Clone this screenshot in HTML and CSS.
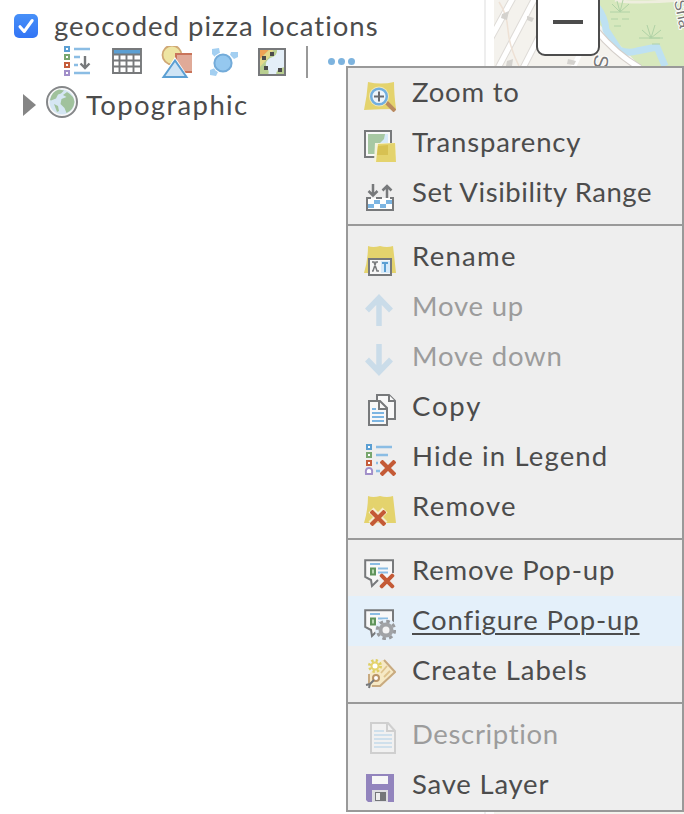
FILE: index.html
```html
<!DOCTYPE html>
<html lang="en">
<head>
<meta charset="utf-8">
<title>Map contents</title>
<link rel="stylesheet" href="styles.css">
</head>
<body>
<svg class="defs" width="0" height="0" aria-hidden="true">
  <defs>
    <symbol id="cross" viewBox="0 0 16 16"><path d="m1 1 14 14M15 1 1 15" fill="none" stroke="#c45a36" stroke-width="4.200"/></symbol>
    <g id="bullets" fill="#fff" stroke-width="2"><path d="M3 1h4v4H3z" stroke="#5b9fd3"/><path d="M3 9h4v4H3z" stroke="#78a66e"/><path d="M3 17h4v4H3z" stroke="#c55d3b"/></g>
    <g id="bubble"><path d="M1 1.2h28v18H15L7.500 27l-1-7-5.500-2z" fill="#f8f8f8"/><path d="M29 14V1.200H1.200V18l5.800 3 1 6 6-6" fill="none" stroke="#77797b" stroke-width="2"/><path d="M6 5h10M14 9.500h10M14 13.500h10" stroke="#8bbde4" stroke-width="2"/><path d="M7 9.500h4v6H7z" fill="#b8d6b2" stroke="#5f945b" stroke-width="2"/></g>
  </defs>
</svg>
<main class="app">
  <aside class="contents">
    <label class="layer">
      <span class="check"><svg viewBox="0 0 24 24"><path d="M6 12.700 10.200 17.500 18.200 6.500" fill="none" stroke="#fff" stroke-width="3" stroke-linecap="round" stroke-linejoin="round"/></svg></span>
      <span class="t-geo">geocoded pizza locations</span>
    </label>
    <div class="tools">
      <svg class="icon" viewBox="0 0 32 32"><g transform="translate(-2)"><use href="#bullets"/><path d="M3 25h4v4H3z" fill="#fff" stroke="#a18fc9" stroke-width="2"/></g><path d="M10 3h16M10 11h6M10 19h4M10 27h16" stroke="#8bbde4" stroke-width="2.500"/><path d="M21 10v12M16.500 17.500 21 22l4.500-4.500" fill="none" stroke="#77797b" stroke-width="2.400"/></svg>
      <svg class="icon" viewBox="0 0 32 32"><path d="M1 3h28v24H1z" fill="#fff"/><path d="M1 3h28v5H1z" fill="#5b9fd3"/><path d="M1 3h28v24H1zM1 8.500h28M1 14.500h28M1 20.500h28M7.500 9v18M14.500 9v18M21.500 9v18" fill="none" stroke="#77797b" stroke-width="1.900"/></svg>
      <svg class="icon" viewBox="0 0 32 32"><circle cx="12" cy="9" r="9.500" fill="#eee5a3" stroke="#d0a875" stroke-width="1.800"/><path d="M16 8h18v18H16z" fill="#e0aa98" stroke="#c9745a" stroke-width="2"/><path d="M15 11 1 32h28z" fill="#fff"/><path d="M15 14.500 3.500 31h23z" fill="#cfe4f5" stroke="#5b9fd3" stroke-width="2"/></svg>
      <svg class="icon" viewBox="0 0 32 32"><g fill="#a3cff1"><path d="M4 3l7-1 1 5-5 4-3-3zM23 6l7 0 0 5-4 2-4-4zM2 24l5-2 3 4-2 4-6-1z"/></g><circle cx="15" cy="17" r="10.500" fill="#fff"/><circle cx="15" cy="17" r="8.600" fill="#95c8ef" stroke="#73abd9" stroke-width="2"/></svg>
      <svg class="icon" viewBox="0 0 32 32"><path d="M3 3h26v26H3z" fill="#e4eff8"/><path d="M3 3h18q1 7-7 9-5 3-4 8 4 5 2 9H3z" fill="#b9cf91"/><path d="M3 3h11L3 14z" fill="#eea355"/><path d="M14 3 3 14v8l10-11 5-8z" fill="#e5d98a"/><path d="M20 29q0-7 9-8v8z" fill="#b9cf91"/><path d="M3 3h26v26H3z" fill="none" stroke="#77797b" stroke-width="2"/><path d="M14 6h4v4h-4zM6 10h4v4H6zM8 20h4v4H8zM22 22h4v4h-4z" fill="#4c4c4c"/></svg>
      <span class="divider"></span>
      <span class="dots"><i></i><i></i><i></i></span>
    </div>
    <div class="base">
      <svg class="arrow" viewBox="0 0 13 22"><path d="M0 0 13 11 0 22z" fill="#858585"/></svg>
      <svg class="icon" viewBox="0 0 32 32"><circle cx="16" cy="16" r="15" fill="#f9f9f9" stroke="#858789" stroke-width="2"/><circle cx="16" cy="16" r="12.500" fill="#d5e6f3"/><path d="M4 14Q6 5 13 3.500l5 1-3 3-3 1-2 4-5 2zM17 9l4-3q7 4 7.500 10-1 8-8 11l-2-5-4-4 1-5 5-2zM8 18l4 2 1 5-2 1z" fill="#a0c29c"/></svg>
      <span class="t-topo">Topographic</span>
    </div>
  </aside>
  <section class="map">
    <svg class="tiles" viewBox="0 0 190 66" preserveAspectRatio="none">
      <path d="M0 0h190v66H0z" fill="#f4f2ed"/>
      <path d="M100 0h90v66h-44L118 37 103 22z" fill="#d7e8bd"/>
      <path d="M121 0q14 4 69 0" stroke="#eeeede" stroke-width="3" fill="none"/>
      <g stroke="#dedbd7" stroke-width="7"><path d="M20-4-12 54M42-4 3 70M66-4 28 70"/></g><g stroke="#fff" stroke-width="5"><path d="M20-4-12 54M42-4 3 70M66-4 28 70M95 35 78 70"/></g>
      <path d="M5 2q8 12 9 28t11 36" stroke="#eee1d5" stroke-width="1.500" fill="none"/>
      <g fill="#d4d2ce"><path d="M8 14l7-3-2 9-6-2zM33 16l7 2-2 4-5-2zM13 61l6-2-1 7h-6zM74 59l8 2-2 4-7-1z"/></g>
      <path d="M103 7q8 10 9 23l13 20q9 4 18 1l20-4 8 19" stroke="#bee1f2" stroke-width="7" fill="none" stroke-linejoin="round"/>
      <path d="M102 30q20 24 44 38" stroke="#d4cec9" stroke-width="7" fill="none"/><path d="M102 30q20 24 44 38" stroke="#fff" stroke-width="5" fill="none"/>
      <path d="M116 12h20m-10 0L118 4m8 8-3-11m3 11 3-12m-3 12 9-8m10 34h24m-12 0-9-8m9 8-4-13m4 13 4-13m-4 13 10-8M117 19h7m4 0h7m-15 7h7m28 12h11m-8 6h8" stroke="#b0d2a6" stroke-width="1" fill="none"/>
      <g class="street"><text transform="translate(101 54) rotate(97)">S</text><text class="street-end" transform="translate(180 1) rotate(78)">Sha</text></g>
    </svg>
    <button class="zoom" aria-label="Zoom out"><span></span></button>
  </section>
  <nav class="menu">
    <div class="group">
      <div class="row"><svg class="icon" viewBox="0 0 32 32"><path d="M4 2q13 3 26 0 0 12 2 27-16 0-32 1Q3 16 4 2z" fill="#e4d36d"/><path d="m21 21 10 10" stroke="#b98a60" stroke-width="4"/><circle cx="15" cy="16.500" r="10" fill="#efe7bc"/><circle cx="15" cy="16.500" r="7.800" fill="#edf4fa" stroke="#71afe0" stroke-width="2.500"/><path d="M15 11.500v10M10 16.500h10" stroke="#686b70" stroke-width="2"/></svg><span class="t-zoom">Zoom to</span></div>
      <div class="row"><svg class="icon" viewBox="0 0 32 32"><path d="M1 1h26v26H1z" fill="#f8f8f8" stroke="#77797b" stroke-width="2"/><path d="M4 4h20v20H4z" fill="#a7c8a3"/><path d="M24 4v10h-9l5-5 1-5z" fill="#d7eaf9"/><path d="M11 13h21v19H10z" fill="#f4f2dc"/><path d="m14 14 17-1 1 19H12z" fill="#e4d36d"/><path d="m14 16 10-1v10H13z" fill="#d7c152"/></svg><span class="t-trans">Transparency</span></div>
      <div class="row"><svg class="icon" viewBox="0 0 32 32"><path d="M3 18h26v12H3z" fill="#fff"/><path d="M3 17v13h26V17M3 18h4M12 18h6M26 18h3" fill="none" stroke="#77797b" stroke-width="2"/><path d="M4 24h6v4H4zM10 20h6v4h-6zM16 24h6v4h-6zM22 20h6v4h-6z" fill="#7cb5e2"/><path d="M9 4v11M4.500 11 9 15.500 13.500 11M23 18V6M18.500 10.500 23 6l4.500 4.500" fill="none" stroke="#77797b" stroke-width="2.500"/></svg><span class="t-range">Set Visibility Range</span></div>
    </div>
    <div class="group">
      <div class="row"><svg class="icon" viewBox="0 0 32 32"><path d="M4 2q5 2 12 0 7 2 13 0l3 27H0Q4 16 4 2z" fill="#e4d36d"/><path d="M5 15h22v16H5z" fill="#f8f8f8" stroke="#77797b" stroke-width="2"/><path d="M17 17h9v12h-9z" fill="#d7eaf9"/><path d="M8 18h2l3 9h2M14 18h-2l-3 9H8" fill="none" stroke="#77797b" stroke-width="1.500"/><path d="M18 19h6m-3 0v9" stroke="#5b9fd3" stroke-width="2"/></svg><span class="t-rename">Rename</span></div>
      <div class="row disabled"><svg class="icon" viewBox="0 0 32 32"><path d="M15 32V4M3 16.500 15 4l12 12.500" fill="none" stroke="#cadce9" stroke-width="5.500"/></svg><span class="t-up">Move up</span></div>
      <div class="row disabled"><svg class="icon" viewBox="0 0 32 32"><path d="M15 0v28M3 15.500 15 28l12-12.500" fill="none" stroke="#cadce9" stroke-width="5.500"/></svg><span class="t-down">Move down</span></div>
      <div class="row"><svg class="icon" viewBox="0 0 32 32"><path d="M13 1h12l6 6v18H13z" fill="#f8f8f8" stroke="#77797b" stroke-width="2"/><path d="M25 1v6h6M5 7h11l7 7v17H5z" fill="#f8f8f8" stroke="#77797b" stroke-width="2"/><path d="M15 7v8h8" fill="none" stroke="#77797b" stroke-width="2"/><path d="M8 15h4M8 19h12M8 23h12M8 27h12" stroke="#7cb5e2" stroke-width="2"/></svg><span class="t-copy">Copy</span></div>
      <div class="row"><svg class="icon" viewBox="0 0 32 32"><use href="#bullets"/><path d="M2 30q-1-6 3-6t3 6z" fill="#fff" stroke="#a18fc9" stroke-width="2"/><path d="M12 3h16M12 11h12M12 19h2M12 27h4" stroke="#8bbde4" stroke-width="2.400"/><use href="#cross" x="16" y="16" width="16" height="16"/></svg><span class="t-hide">Hide in Legend</span></div>
      <div class="row"><svg class="icon" viewBox="0 0 32 32"><path d="M4 2q5 2 12 0 7 2 13 0l3 27H0Q4 16 4 2z" fill="#e4d36d"/><path d="m7 16 14 14m0-14L7 30" stroke="#f5edce" stroke-width="7"/><use href="#cross" x="6" y="16" width="16" height="16"/></svg><span class="t-rename">Remove</span></div>
    </div>
    <div class="group">
      <div class="row"><svg class="icon" viewBox="0 0 32 32"><use href="#bubble" y="1"/><use href="#cross" x="15.500" y="15.500" width="15" height="15"/></svg><span class="t-rpop">Remove Pop-up</span></div>
      <div class="row active"><svg class="icon" viewBox="0 0 32 32"><use href="#bubble" y="1"/><circle cx="22" cy="22" r="11" fill="#e4f0fa"/><circle cx="22" cy="22" r="8.700" fill="none" stroke="#999b9e" stroke-width="3" stroke-dasharray="3.600 3.230"/><circle cx="22" cy="22" r="5.500" fill="#f4f4f4" stroke="#a1a3a6" stroke-width="4"/></svg><span class="t-conf">Configure Pop-up</span></div>
      <div class="row"><svg class="icon" viewBox="0 0 32 32"><path d="M5 16 18 2h3l11 12-15 15H6z" fill="#f6e9c5"/><path d="m20 2 11 12-15 14H8M5 26V16" fill="none" stroke="#c8aa80" stroke-width="2"/><path d="m17 15 6-7m-3 11 6-6" stroke="#dfc38e" stroke-width="1.800"/><circle cx="11" cy="8" r="5.500" fill="none" stroke="#dfcf62" stroke-width="3" stroke-dasharray="2.200 2.120"/><circle cx="11" cy="8" r="3.500" fill="#fff" stroke="#e4d36d" stroke-width="2"/><circle cx="12" cy="20" r="3" fill="#fff" stroke="#b99468" stroke-width="2"/><path d="m10 22-4 4-4 1m4-1-1 4" stroke="#77797b" stroke-width="2" fill="none"/></svg><span class="t-labels">Create Labels</span></div>
    </div>
    <div class="group">
      <div class="row disabled"><svg class="icon" viewBox="0 0 32 32"><path d="M7 1h17l7 8v22H7z" fill="#f1f1f1" stroke="#cfcfcf" stroke-width="2"/><path d="M23 1v8h8" fill="none" stroke="#cfcfcf" stroke-width="2"/><path d="M10 9h10M10 13h18M10 17h18M10 21h18M10 25h18" stroke="#cfe0ec" stroke-width="2"/></svg><span class="t-desc">Description</span></div>
      <div class="row"><svg class="icon" viewBox="0 0 32 32"><path d="M2 2h28v28H4l-2-2z" fill="#9284bd"/><path d="M8 4h16v8H8z" fill="#f6f6f6"/><path d="M8 18h16v12H8z" fill="#dedee2"/><path d="M11 20h11v9H11z" fill="#747679"/><path d="M12 21h4v7h-4z" fill="#eee"/></svg><span class="t-save">Save Layer</span></div>
    </div>
  </nav>
</main>
</body>
</html>
```

FILE: styles.css
```css
* { box-sizing: border-box; }
body { margin: 0; background: #fff; color: #4c4c4c; font-family: Lato, "Liberation Sans", sans-serif; font-size: 27.5px; }
.defs { position: absolute; }
.app { position: relative; display: flex; width: 684px; height: 814px; overflow: hidden; }
.contents { width: 486px; border-right: 2px solid #eee; }
.layer { display: flex; gap: 16px; height: 46px; padding: 14px 0 0 14px; line-height: 24px; white-space: nowrap; }
.check { width: 24px; height: 24px; border-radius: 5px; background: linear-gradient(#4790f8, #3274f5); }
.check svg { display: block; }
.tools { display: flex; gap: 16px; height: 32px; padding-left: 64px; }
.icon { display: block; flex: none; width: 32px; height: 32px; }
.divider { width: 2px; margin-left: 2px; background: #999; }
.dots { display: flex; gap: 3px; margin-left: 4px; padding-top: 12px; }
.dots i { width: 7px; height: 7px; border-radius: 50%; background: #7db3de; }
.base { display: flex; padding: 8px 0 0 23px; line-height: 38px; }
.arrow { width: 13px; height: 22px; margin: 8px 10px 0 0; }
.base span { margin-left: 8px; }
.map { position: relative; width: 190px; margin-left: 8px; background: #f4f3ed; }
.tiles { display: block; width: 190px; height: 66px; }
.street { font-family: "Liberation Sans", sans-serif; font-size: 20px; fill: #777; stroke: #fff; stroke-width: 2px; paint-order: stroke; }
.street-end { font-size: 16px; }
.zoom { position: absolute; left: 42px; top: -12px; width: 64px; height: 68px; padding: 0; border: 2px solid #4c4c4c; border-radius: 9px; background: #fff; }
.zoom span { display: block; width: 30px; height: 4px; margin: 0 auto; background: #4c4c4c; }
.menu { position: absolute; left: 346px; top: 66px; width: 338px; height: 746px; border: 2px solid #999; background: #eee; }
.group { padding: 6px 0; border-bottom: 2px solid #999; }
.group:first-child { padding-top: 0; }
.group:last-child { padding-bottom: 0; border-bottom: 0; }
.row { display: flex; gap: 16px; height: 50px; padding: 12px 0 0 16px; white-space: nowrap; line-height: 24px; }
.disabled { color: #9c9c9c; }
.active { background: #e4f0fa; }
.active span { height: 32px; text-decoration: underline; text-decoration-thickness: 2px; text-underline-offset: 3px; }
.t-geo { letter-spacing: 1px; }
.t-topo { letter-spacing: 1.35px; }
.t-zoom, .t-trans, .t-up, .t-down, .t-save { letter-spacing: .8px; }
.t-range { letter-spacing: .55px; }
.t-rename { letter-spacing: 1.3px; }
.t-copy { letter-spacing: 1.8px; }
.t-hide { letter-spacing: 1.15px; }
.t-rpop { letter-spacing: .88px; }
.t-conf { letter-spacing: .88px; }
.t-labels { letter-spacing: .95px; }
.t-desc { letter-spacing: .65px; }
```
